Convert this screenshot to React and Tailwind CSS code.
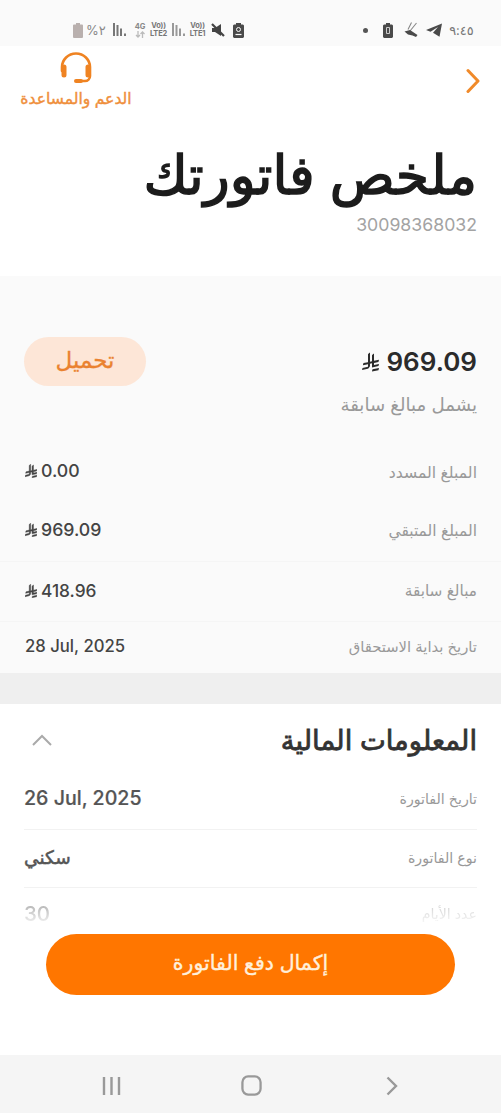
import React from "react";

function Riyal({ className }) {
  return (
    <svg viewBox="0 0 1124.14 1256.39" fill="currentColor" className={className}>
      <path d="M699.62,1113.02h0c-20.06,44.48-33.32,92.75-38.4,143.37l424.51-90.24c20.06-44.47,33.31-92.75,38.4-143.37l-424.51,90.24Z" />
      <path d="M1085.73,895.8c20.06-44.47,33.32-92.75,38.4-143.37l-330.68,70.33v-135.2l292.27-62.11c20.06-44.47,33.32-92.75,38.4-143.37l-330.68,70.27V66.13c-50.67,28.45-95.67,66.32-132.25,110.99v403.35l-132.25,28.11V0c-50.67,28.44-95.67,66.32-132.25,110.99v525.69l-295.91,62.88c-20.06,44.47-33.33,92.75-38.42,143.37l334.33-71.05v170.26l-358.3,76.14c-20.06,44.47-33.32,92.75-38.4,143.37l375.04-79.7c30.53-6.35,56.77-24.4,73.83-49.24l68.78-101.97v-.02c7.14-10.55,11.3-23.27,11.3-36.97v-149.98l132.25-28.11v270.4l424.53-90.28Z" />
    </svg>
  );
}

function Signal({ className }) {
  return (
    <svg viewBox="0 0 14 14" fill="currentColor" className={className}>
      <rect x="0" y="0" width="2" height="13" />
      <rect x="3.5" y="2" width="2" height="11" />
      <rect x="7" y="5.5" width="2" height="7.5" />
      <rect x="11" y="10.5" width="2" height="2.5" />
    </svg>
  );
}

function VoLte({ label }) {
  return (
    <span className="flex w-[19px] flex-col items-center text-[7.5px] leading-[8px] font-bold tracking-tight text-[#777]">
      <span className="h-[8px]">Vo))</span>
      <span className="h-[8px]">{label}</span>
    </span>
  );
}

function StatusBar() {
  return (
    <div dir="ltr" className="flex h-[46px] items-start justify-between bg-[#fafafa] pt-[22px] pr-[27px] pl-[73px]">
      <div className="flex h-[16px] items-center text-[#777]">
        <svg viewBox="0 0 10 15" className="h-[15px] w-[10px]" fill="#b9b0ae">
          <path d="M3 0h4v1.5h2a1 1 0 0 1 1 1V14a1 1 0 0 1-1 1H1a1 1 0 0 1-1-1V2.500a1 1 0 0 1 1-1h2z" />
        </svg>
        <span className="ml-[3px] w-[22px] text-[13px] leading-4 whitespace-nowrap text-[#888]">%٢</span>
        <Signal className="ml-[5px] h-[14px] w-[14px] text-[#777]" />
        <span className="ml-[8px] flex w-[10px] flex-col items-center text-[7.5px] leading-[8px] font-bold text-[#888]">
          <span className="h-[8px]">4G</span>
          <svg viewBox="0 0 10 7" className="h-[7px] w-[10px]" fill="none" stroke="#bbb" strokeWidth="1.300">
            <path d="M3 0v6M1 4l2 2 2-2M7.500 7V1M5.500 3l2-2 2 2" />
          </svg>
        </span>
        <span className="ml-[4px]"><VoLte label="LTE2" /></span>
        <Signal className="ml-[4px] h-[14px] w-[14px] text-[#999]" />
        <span className="ml-[2px]"><VoLte label="LTE1" /></span>
        <svg viewBox="0 0 14 14" className="ml-[4px] h-[14px] w-[14px] text-[#444]">
          <path d="M1 5h3l6-4v12l-6-4H1z" fill="currentColor" />
          <path d="M1 1l12 12" stroke="currentColor" strokeWidth="2.200" />
        </svg>
        <svg viewBox="0 0 11 15" className="ml-[8px] h-[15px] w-[11px]">
          <path d="M3 0h5v1.500h2l1 1V14l-1 1H1l-1-1V2.500l1-1h2z" fill="#4a4a4a" />
          <circle cx="5.500" cy="6.500" r="2" stroke="#fafafa" strokeWidth="1" fill="none" />
          <path d="M2.500 11.500h6" stroke="#fafafa" strokeWidth="1.200" />
        </svg>
      </div>
      <div className="flex h-[16px] items-center">
        <span className="h-[5px] w-[5px] rounded-full bg-[#555]" />
        <svg viewBox="0 0 10 15" className="ml-[15px] h-[15px] w-[10px]">
          <path d="M3 0h4v1.500h2l1 1V14l-1 1H1l-1-1V2.500l1-1h2z" fill="#4a4a4a" />
          <path d="M3.500 4.500h3v6h-3z" stroke="#ccc" strokeWidth="1" fill="none" />
        </svg>
        <svg viewBox="0 0 15 15" className="ml-[11px] h-[16px] w-[15px]" fill="none">
          <path d="M7.500 0L4 7M12.500 0.500L6 8.500" stroke="#888" strokeWidth="1.100" />
          <path d="M0.500 9L6 7.500l7.500 5-1.500 2L8.500 13 4 12z" fill="#4a4a4a" />
        </svg>
        <svg viewBox="0 0 16 14" className="ml-[7px] h-[14px] w-[16px]" fill="#4a4a4a">
          <path d="M16 0.500L0 7l4.500 1.800L12 4 7 9.800l6.500 4z" />
        </svg>
        <span className="ml-[7px] w-[25px] text-center text-[13px] leading-4 whitespace-nowrap text-[#777]">٩:٤٥</span>
      </div>
    </div>
  );
}

function Header() {
  return (
    <header className="h-[230px] bg-white pr-[24px] pl-[19px]">
      <div className="flex h-[66px] items-start justify-between">
        <svg viewBox="0 0 14 26" className="mt-[22px] mr-[-3px] h-[26px] w-[14px]" fill="none" stroke="#f08a2a" strokeWidth="3" strokeLinecap="round" strokeLinejoin="round">
          <path d="M2 2.500l10 10.500L2 23.500" />
        </svg>
        <div className="flex w-[114px] flex-col items-center">
          <svg viewBox="0 0 34 34" className="mt-[5px] h-[34px] w-[34px]" fill="none" stroke="#ef8322" strokeWidth="2.600" strokeLinecap="round">
            <path d="M3 20v-4a14 13.500 0 0 1 28 0v9a5 5 0 0 1-5 5h-8" />
            <path d="M5 16v8M29 16v8" strokeWidth="5" />
            <path d="M17 30h5" strokeWidth="4" />
          </svg>
          <span className="mt-[4px] text-[15.600px] leading-5 whitespace-nowrap text-[#ef8f3c] [-webkit-text-stroke:0.4px_#ef8f3c]">الدعم والمساعدة</span>
        </div>
      </div>
      <h1 className="mt-[28px] h-[70px] text-[53.800px] leading-[70px] font-normal whitespace-nowrap text-[#1c1c1c] [-webkit-text-stroke:1.500px_#1c1c1c]">ملخص فاتورتك</h1>
      <p className="mt-[5px] text-[17.700px] leading-5 text-[#a3a3a3]">30098368032</p>
    </header>
  );
}

function SummaryRow({ label, value, currency, className, labelSize, valueSize }) {
  return (
    <div className={"flex items-center justify-between pr-[24px] pl-[25px] " + className}>
      <span className={"pt-[2px] whitespace-nowrap text-[#999] " + labelSize}>{label}</span>
      <span dir="ltr" className={"flex items-center font-medium whitespace-nowrap text-[#444] " + valueSize}>
        {currency && <Riyal className="mr-[4px] h-[14px] w-[12px] [stroke-width:40] [stroke:#444]" />}
        {value}
      </span>
    </div>
  );
}

function Summary() {
  return (
    <section className="h-[397px] bg-[#fafafa]">
      <div className="flex h-[166px] items-start justify-between pr-[24px] pl-[24px]">
        <div className="flex flex-col items-start">
          <div dir="ltr" className="mt-[70px] flex h-[32px] items-center text-[26px] leading-8 font-semibold text-[#2b2b2b]">
            <Riyal className="mr-[7px] h-[20px] w-[17px]" />
            969.09
          </div>
          <p className="mt-[12px] h-[28px] text-[18.200px] leading-7 whitespace-nowrap text-[#999]">يشمل مبالغ سابقة</p>
        </div>
        <button className="mt-[61px] flex h-[49px] w-[122px] items-center justify-center rounded-full bg-[#fde6d7] pb-[2px] text-[23px] text-[#ea8230] [-webkit-text-stroke:0.3px_#ea8230]">
          تحميل
        </button>
      </div>
      <SummaryRow className="h-[59px]" labelSize="text-[15.700px]" valueSize="text-[17.700px]" label="المبلغ المسدد" value="0.00" currency />
      <SummaryRow className="h-[60px] pb-[2px]" labelSize="text-[15.500px]" valueSize="text-[17.700px]" label="المبلغ المتبقي" value="969.09" currency />
      <SummaryRow className="h-[60px] border-t border-[#f5f5f5] pb-[2px]" labelSize="text-[15.300px]" valueSize="text-[17.300px]" label="مبالغ سابقة" value="418.96" currency />
      <SummaryRow className="h-[52px] border-t border-[#f5f5f5] pb-[2px]" labelSize="text-[14.800px]" valueSize="text-[16.700px]" label="تاريخ بداية الاستحقاق" value="28 Jul, 2025" />
    </section>
  );
}

function DetailRow({ label, value, className, valueSize }) {
  return (
    <div className={"flex items-center justify-between " + className}>
      <span className="text-[14.200px] whitespace-nowrap text-[#999]">{label}</span>
      <span className={"font-medium whitespace-nowrap text-[#555] " + valueSize} dir="ltr">{value}</span>
    </div>
  );
}

function Financial() {
  return (
    <section className="h-[351px] bg-white px-[24px]">
      <div className="flex h-[66px] items-center justify-between pt-[6px]">
        <h2 className="text-[27.400px] leading-9 font-normal whitespace-nowrap text-[#333] [-webkit-text-stroke:0.8px_#333]">المعلومات المالية</h2>
        <svg viewBox="0 0 20 12" className="ml-[8px] h-[12px] w-[20px]" fill="none" stroke="#aaa" strokeWidth="2">
          <path d="M1 11l9-9 9 9" />
        </svg>
      </div>
      <DetailRow className="h-[60px] border-b border-[#f2f2f2] pb-[2px]" valueSize="text-[19.600px] [-webkit-text-stroke:0.2px_#555]" label="تاريخ الفاتورة" value="26 Jul, 2025" />
      <DetailRow className="h-[58px] border-b border-[#f2f2f2] pb-[2px]" valueSize="text-[18.500px] [-webkit-text-stroke:0.5px_#555]" label="نوع الفاتورة" value="سكني" />
      <DetailRow className="h-[46px] pt-[6px] [mask-image:linear-gradient(to_bottom,rgba(0,0,0,0.4)_40%,rgba(0,0,0,0.05)_80%)]" valueSize="text-[20.500px]" label="عدد الأيام" value="30" />
      <button className="mx-auto flex h-[61px] w-[409px] items-center justify-center rounded-full bg-[#ff7600] pb-[2px] text-[20.500px] text-[#fff0dc] [-webkit-text-stroke:0.4px_#fff0dc]">
        إكمال دفع الفاتورة
      </button>
    </section>
  );
}

function NavBar() {
  return (
    <nav dir="ltr" className="flex h-[58px] items-center bg-[#f5f5f5] pt-[3px] pl-[101px]">
      <svg viewBox="0 0 20 20" className="h-[20px] w-[20px]" stroke="#999" strokeWidth="2.400">
        <path d="M3 1v18M10.500 1v18M18 1v18" />
      </svg>
      <svg viewBox="0 0 22 22" className="ml-[120px] h-[21px] w-[21px]" fill="none" stroke="#999" strokeWidth="2.400">
        <rect x="1.500" y="1.500" width="19" height="19" rx="6" />
      </svg>
      <svg viewBox="0 0 12 20" className="ml-[124px] h-[20px] w-[12px]" fill="none" stroke="#999" strokeWidth="2.400">
        <path d="M1.500 1.500L10 10l-8.500 8.500" />
      </svg>
    </nav>
  );
}

export default function App() {
  return (
    <div dir="rtl" className="flex h-[1113px] w-[501px] flex-col overflow-hidden bg-white font-['Inter','DejaVu_Sans',sans-serif]">
      <StatusBar />
      <Header />
      <Summary />
      <div className="h-[31px] bg-[#efefef]" />
      <Financial />
      <NavBar />
    </div>
  );
}
